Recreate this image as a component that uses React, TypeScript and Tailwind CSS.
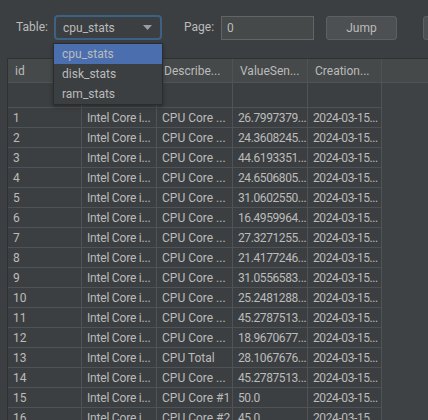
import React from "react";

const rows: [string, string, string][] = [
  ["1", "CPU Core ...", "26.7997379..."],
  ["2", "CPU Core ...", "24.3608245..."],
  ["3", "CPU Core ...", "44.6193351..."],
  ["4", "CPU Core ...", "24.6506805..."],
  ["5", "CPU Core ...", "31.0602550..."],
  ["6", "CPU Core ...", "16.4959964..."],
  ["7", "CPU Core ...", "27.3271255..."],
  ["8", "CPU Core ...", "21.4177246..."],
  ["9", "CPU Core ...", "31.0556583..."],
  ["10", "CPU Core ...", "25.2481288..."],
  ["11", "CPU Core ...", "45.2787513..."],
  ["12", "CPU Core ...", "18.9670677..."],
  ["13", "CPU Total", "28.1067676..."],
  ["14", "CPU Core ...", "45.2787513..."],
  ["15", "CPU Core #1", "50.0"],
  ["16", "CPU Core #2", "45.0"],
];

const cell = "h-[20px] border-r border-b border-[#505355] pl-[5px] leading-[20px] whitespace-nowrap overflow-hidden";

export default function App() {
  return (
    <div
      className="relative w-[428px] h-[420px] overflow-hidden bg-[#3c3f41] text-[12px] text-[#bbbbbb]"
      style={{ fontFamily: 'Roboto, "Liberation Sans", sans-serif' }}
    >
      {/* Toolbar */}
      <div className="flex items-start h-[58px] pt-[15px] pl-[16px]">
        <span className="shrink-0 w-[38px] h-[25px] leading-[25px]">Table:</span>
        <div className="shrink-0 w-[108px] h-[25px] rounded-[4px] border-2 border-[#3d6185] bg-[#3c3f41] flex items-center justify-between pl-[7px] pr-[8px]">
          <span className="leading-none">cpu_stats</span>
          <svg width="9" height="5" viewBox="0 0 9 5">
            <path d="M0 0h9L4.5 5z" fill="#9a9da1" />
          </svg>
        </div>
        <span className="shrink-0 ml-[22px] w-[37px] h-[25px] leading-[25px]">Page:</span>
        <div className="shrink-0 mt-[1px] w-[93px] h-[24px] border border-[#646464] bg-[#45494a] pl-[5px] leading-[22px]">0</div>
        <button className="shrink-0 ml-[12px] mt-[1px] w-[71px] h-[24px] rounded-[3px] border border-[#5e6060] bg-[#4c5052] text-[#bbbbbb] leading-[22px]">
          Jump
        </button>
        <button className="shrink-0 ml-[26px] mt-[1px] w-[40px] h-[24px] rounded-[3px] border border-[#5e6060] bg-[#4c5052]" />
      </div>

      {/* Table */}
      <div className="ml-[7px] border-l border-t border-[#2f3133] h-[362px] bg-[#3f4244]">
        <div className="flex h-[24px] bg-[#45494a] border-b border-[#505355]">
          {["id", "", "Describe...", "ValueSen...", "Creation..."].map((h, i) => (
            <div
              key={i}
              className={`${["w-[74px]", "w-[75px]", "w-[76px]", "w-[75px]", "w-[74px]"][i]} shrink-0 h-[23px] flex items-center pl-[7px] border-r border-[#505355]`}
            >
              {h}
            </div>
          ))}
        </div>
        <div className="w-[374px] bg-[#3c3f41]">
          <div className="grid grid-cols-[74px_75px_76px_75px_74px]">
            <div className="h-[25px] border-r border-b border-[#505355]" />
            <div className="h-[25px] border-r border-b border-[#505355]" />
            <div className="h-[25px] border-r border-b border-[#505355]" />
            <div className="h-[25px] border-r border-b border-[#505355]" />
            <div className="h-[25px] border-r border-b border-[#505355]" />
            {rows.map(([id, desc, val]) => (
              <React.Fragment key={id}>
                <div className={`${cell} pl-[3px]`}>{id}</div>
                <div className={`${cell} tracking-[-0.2px]`}>Intel Core i...</div>
                <div className={cell}>{desc}</div>
                <div className={`${cell} pl-[3px] tracking-[-0.4px]`}>{val}</div>
                <div className={`${cell} pl-[4px] tracking-[-0.4px]`}>2024-03-15...</div>
              </React.Fragment>
            ))}
          </div>
        </div>
      </div>

      {/* Combo popup */}
      <div className="absolute left-[53px] top-[43px] w-[110px] h-[62px] border border-[#2a2c2d] bg-[#3c3f41] shadow-[0_2px_4px_rgba(0,0,0,0.3)]">
        <div className="h-[20px] leading-[20px] pl-[8px] bg-[#4b6eaf]">cpu_stats</div>
        <div className="h-[20px] leading-[20px] pl-[8px]">disk_stats</div>
        <div className="h-[20px] leading-[20px] pl-[8px]">ram_stats</div>
      </div>
    </div>
  );
}
